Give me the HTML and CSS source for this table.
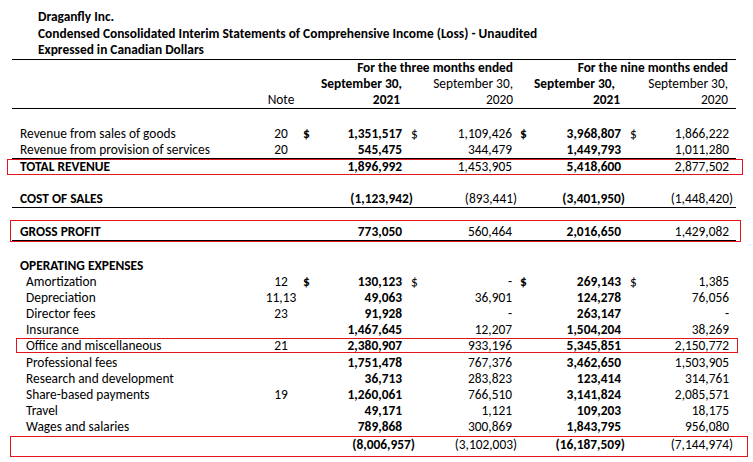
FILE: index.html
```html
<!DOCTYPE html>
<html>
<head>
<meta charset="utf-8">
<link rel="stylesheet" href="styles.css">
</head>
<body>
<div class="page">
  <div class="title">
    <div>Draganfly Inc.</div>
    <div>Condensed Consolidated Interim Statements of Comprehensive Income (Loss) - Unaudited</div>
    <div>Expressed in Canadian Dollars</div>
  </div>
  <table class="fs">
    <colgroup>
      <col class="c-label"><col class="c-note"><col class="c-d1"><col class="c-v"><col class="c-d2"><col class="c-v"><col class="c-d1"><col class="c-v"><col class="c-d2"><col class="c-v">
    </colgroup>
    <tbody>
      <tr class="hrow top">
        <td colspan="2"></td>
        <td colspan="4" class="b ph1">For the three months ended</td>
        <td colspan="4" class="b ph2">For the nine months ended</td>
      </tr>
      <tr class="hrow">
        <td colspan="2"></td><td></td>
        <td class="b hs1">September 30,</td><td></td>
        <td class="hs2">September 30,</td><td></td>
        <td class="b hs3">September 30,</td><td></td>
        <td class="hs4">September 30,</td>
      </tr>
      <tr class="hrow line">
        <td></td><td class="note">Note</td><td></td>
        <td class="b hy1">2021</td><td></td>
        <td class="hy2">2020</td><td></td>
        <td class="b hy3">2021</td><td></td>
        <td class="hy4">2020</td>
      </tr>
      <tr class="gap g17"><td colspan="10"></td></tr>
      <tr>
        <td class="lbl">Revenue from sales of goods</td><td class="note">20</td><td class="dl b">$</td>
        <td class="v1 b">1,351,517</td><td class="dr">$</td>
        <td class="v2">1,109,426</td><td class="dl b">$</td>
        <td class="v3 b">3,968,807</td><td class="dr">$</td>
        <td class="v4">1,866,222</td>
      </tr>
      <tr class="line">
        <td class="lbl">Revenue from provision of services</td><td class="note">20</td><td></td>
        <td class="v1 b">545,475</td><td></td>
        <td class="v2">344,479</td><td></td>
        <td class="v3 b">1,449,793</td><td></td>
        <td class="v4">1,011,280</td>
      </tr>
      <tr>
        <td class="lbl b">TOTAL REVENUE</td><td></td><td></td>
        <td class="v1 b">1,896,992</td><td></td>
        <td class="v2">1,453,905</td><td></td>
        <td class="v3 b">5,418,600</td><td></td>
        <td class="v4">2,877,502</td>
      </tr>
      <tr class="gap"><td colspan="10"></td></tr>
      <tr class="line">
        <td class="lbl b">COST OF SALES</td><td></td><td></td>
        <td class="v1 b neg"><span class="hang">(1,123,942)</span></td><td></td>
        <td class="v2 neg">(893,441)</td><td></td>
        <td class="v3 b neg">(3,401,950)</td><td></td>
        <td class="v4 neg">(1,448,420)</td>
      </tr>
      <tr class="gap"><td colspan="10"></td></tr>
      <tr class="line">
        <td class="lbl b">GROSS PROFIT</td><td></td><td></td>
        <td class="v1 b">773,050</td><td></td>
        <td class="v2">560,464</td><td></td>
        <td class="v3 b">2,016,650</td><td></td>
        <td class="v4">1,429,082</td>
      </tr>
      <tr class="gap g17"><td colspan="10"></td></tr>
      <tr>
        <td class="lbl b" colspan="10">OPERATING EXPENSES</td>
      </tr>
      <tr class="op">
        <td class="lbl in">Amortization</td><td class="note">12</td><td class="dl b">$</td>
        <td class="v1 b">130,123</td><td class="dr">$</td>
        <td class="v2">-</td><td class="dl b">$</td>
        <td class="v3 b">269,143</td><td class="dr">$</td>
        <td class="v4">1,385</td>
      </tr>
      <tr class="op">
        <td class="lbl in">Depreciation</td><td class="note">11,13</td><td></td>
        <td class="v1 b">49,063</td><td></td>
        <td class="v2">36,901</td><td></td>
        <td class="v3 b">124,278</td><td></td>
        <td class="v4">76,056</td>
      </tr>
      <tr class="op">
        <td class="lbl in">Director fees</td><td class="note">23</td><td></td>
        <td class="v1 b">91,928</td><td></td>
        <td class="v2">-</td><td></td>
        <td class="v3 b">263,147</td><td></td>
        <td class="v4">-</td>
      </tr>
      <tr class="op">
        <td class="lbl in">Insurance</td><td class="note"></td><td></td>
        <td class="v1 b">1,467,645</td><td></td>
        <td class="v2">12,207</td><td></td>
        <td class="v3 b">1,504,204</td><td></td>
        <td class="v4">38,269</td>
      </tr>
      <tr class="op">
        <td class="lbl in">Office and miscellaneous</td><td class="note">21</td><td></td>
        <td class="v1 b">2,380,907</td><td></td>
        <td class="v2">933,196</td><td></td>
        <td class="v3 b">5,345,851</td><td></td>
        <td class="v4">2,150,772</td>
      </tr>
      <tr class="op">
        <td class="lbl in">Professional fees</td><td class="note"></td><td></td>
        <td class="v1 b">1,751,478</td><td></td>
        <td class="v2">767,376</td><td></td>
        <td class="v3 b">3,462,650</td><td></td>
        <td class="v4">1,503,905</td>
      </tr>
      <tr class="op">
        <td class="lbl in">Research and development</td><td class="note"></td><td></td>
        <td class="v1 b">36,713</td><td></td>
        <td class="v2">283,823</td><td></td>
        <td class="v3 b">123,414</td><td></td>
        <td class="v4">314,761</td>
      </tr>
      <tr class="op">
        <td class="lbl in">Share-based payments</td><td class="note">19</td><td></td>
        <td class="v1 b">1,260,061</td><td></td>
        <td class="v2">766,510</td><td></td>
        <td class="v3 b">3,141,824</td><td></td>
        <td class="v4">2,085,571</td>
      </tr>
      <tr class="op">
        <td class="lbl in">Travel</td><td class="note"></td><td></td>
        <td class="v1 b">49,171</td><td></td>
        <td class="v2">1,121</td><td></td>
        <td class="v3 b">109,203</td><td></td>
        <td class="v4">18,175</td>
      </tr>
      <tr class="op line">
        <td class="lbl in">Wages and salaries</td><td class="note"></td><td></td>
        <td class="v1 b">789,868</td><td></td>
        <td class="v2">300,869</td><td></td>
        <td class="v3 b">1,843,795</td><td></td>
        <td class="v4">956,080</td>
      </tr>
      <tr>
        <td class="lbl"></td><td></td><td></td>
        <td class="v1 b neg"><span class="hang hang2">(8,006,957)</span></td><td></td>
        <td class="v2 neg">(3,102,003)</td><td></td>
        <td class="v3 b neg">(16,187,509)</td><td></td>
        <td class="v4 neg">(7,144,974)</td>
      </tr>
    </tbody>
  </table>
  <div class="mark mark-rev"></div>
  <div class="mark mark-gross"></div>
  <div class="mark mark-office"></div>
  <div class="mark mark-total"></div>
</div>
</body>
</html>
```

FILE: styles.css
```css
html, body {
  margin: 0;
  padding: 0;
  background: #ffffff;
}

body {
  font-family: Carlito, Lato, "Liberation Sans", sans-serif;
  font-size: 13.4px;
  color: #000000;
}

.page {
  position: relative;
  width: 753px;
  height: 462px;
  overflow: hidden;
}

.title {
  padding: 9px 0 0 38px;
  font-weight: bold;
  line-height: 16.5px;
  white-space: nowrap;
}

.fs {
  margin-left: 12px;
  width: 724px;
  table-layout: fixed;
  border-collapse: separate;
  border-spacing: 0;
}

.c-label { width: 250px; }
.c-note { width: 38px; }
.c-d1 { width: 10px; }
.c-d2 { width: 12px; }
.c-v { width: 98px; }

.fs td {
  padding: 0;
  height: 16px;
  line-height: 16px;
  white-space: nowrap;
  vertical-align: middle;
}

.fs tr.top td {
  border-top: 1px solid #000;
}

.fs tr.line td {
  border-bottom: 1px solid #000;
}

.fs tr.gap td { height: 16px; }
.fs tr.g17 td { height: 17px; }
.fs tr.op td { height: 16.2px; line-height: 16.2px; }

.b { font-weight: bold; }

.lbl { padding-left: 8px !important; overflow: visible; }
.lbl.in { padding-left: 14px !important; }

.note { text-align: center; }

.dl { text-align: left; padding-left: 3px !important; }
.dr { text-align: left; padding-left: 3px !important; }
.fs td.dl:nth-child(7) { padding-left: 2px !important; }
.fs td.dr:nth-child(9) { padding-left: 4px !important; }

.v1, .v2, .v3, .v4 { text-align: right; }
.fs td.v1 { padding-right: 6px; }
.fs td.v2 { padding-right: 6px; }
.fs td.v3 { padding-right: 5px; }
.fs td.v4 { padding-right: 7px; }

.fs td.v1.neg { padding-right: 0; overflow: visible; }
.fs td.v2.neg { padding-right: 1px; }
.fs td.v3.neg { padding-right: 1px; }
.fs td.v4.neg { padding-right: 3px; }

.hang { display: inline-block; margin-right: -5px; }
.hang2 { margin-right: -7px; }

.ph1 { text-align: right; padding-right: 5px !important; }
.ph2 { text-align: right; padding-right: 8px !important; }
.hs1, .hs2, .hs3, .hs4, .hy1, .hy2, .hy3, .hy4 { text-align: right; overflow: visible; }
.fs td.hs1 { padding-right: 6px; }
.fs td.hs2 { padding-right: 5px; }
.fs td.hs3 { padding-right: 11px; }
.fs td.hs4 { padding-right: 8px; }
.fs td.hy1 { padding-right: 8px; }
.fs td.hy2 { padding-right: 5px; }
.fs td.hy3 { padding-right: 6px; }
.fs td.hy4 { padding-right: 8px; }

.mark {
  position: absolute;
  border: 1px solid #e3141b;
  box-sizing: border-box;
}

.mark-rev { left: 7px; top: 159px; width: 736px; height: 16px; }
.mark-gross { left: 10px; top: 220px; width: 731px; height: 22px; }
.mark-office { left: 16px; top: 338px; width: 722px; height: 15px; }
.mark-total { left: 10px; top: 436px; width: 738px; height: 21px; }
```
